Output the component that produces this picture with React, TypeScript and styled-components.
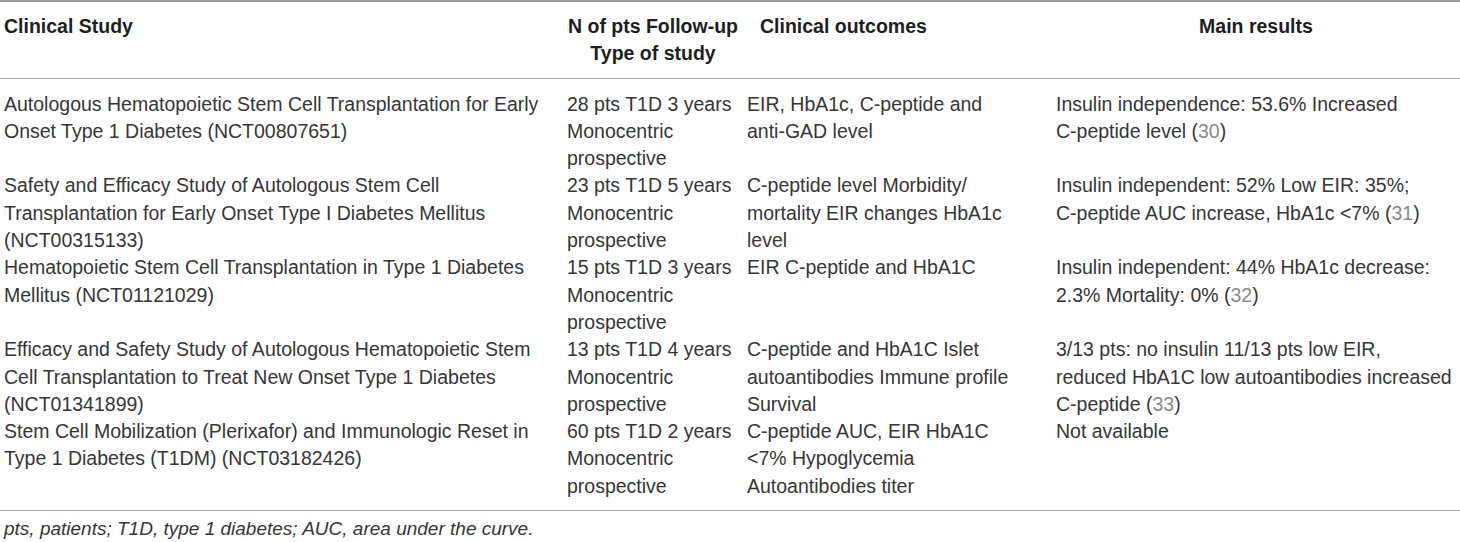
import React from "react";
import styled, { createGlobalStyle } from "styled-components";

const Global = createGlobalStyle`
  html, body { margin: 0; padding: 0; background: #ffffff; }
  body { font-family: "Liberation Sans", Arial, sans-serif; }
`;

const Page = styled.div`
  width: 1460px;
  background: #ffffff;
`;

const Table = styled.table`
  width: 1460px;
  border-collapse: collapse;
  table-layout: fixed;
  font-family: "Liberation Sans", Arial, sans-serif;
  font-size: 19.5px;
  line-height: 27.3px;
  color: #363636;
  border-top: 2px solid #9c9c9c;
`;

const HeadRow = styled.tr`
  border-bottom: 1px solid #a8a8a8;
`;

const Th = styled.th<{ $align?: "left" | "center"; $indent?: number }>`
  font-weight: bold;
  color: #1e1e1e;
  text-align: ${(p) => p.$align ?? "center"};
  vertical-align: top;
  padding: 11px 4px 10px ${(p) => 4 + (p.$indent ?? 0)}px;
  white-space: nowrap;
`;

const BodyRow = styled.tr<{ $last?: boolean }>`
  border-bottom: ${(p) => (p.$last ? "1px solid #a8a8a8" : "none")};
`;

const Td = styled.td<{ $padTop: number; $padBottom: number }>`
  vertical-align: top;
  text-align: left;
  padding: ${(p) => p.$padTop}px 4px ${(p) => p.$padBottom}px 4px;
  white-space: nowrap;
`;

const Line = styled.span`
  display: block;
`;

const Ref = styled.span`
  color: #8a8a8a;
`;

const Footnote = styled.p`
  margin: 0;
  padding: 4px 4px 0 4px;
  font-family: "Liberation Sans", Arial, sans-serif;
  font-style: italic;
  font-size: 19px;
  line-height: 27px;
  color: #363636;
`;

type Cell = React.ReactNode[];

const withRef = (text: string, ref: string) => (
  <>
    {text} (<Ref>{ref}</Ref>)
  </>
);

const rows: Cell[][] = [
  [
    ["Autologous Hematopoietic Stem Cell Transplantation for Early", "Onset Type 1 Diabetes (NCT00807651)"],
    ["28 pts T1D 3 years", "Monocentric", "prospective"],
    ["EIR, HbA1c, C-peptide and", "anti-GAD level"],
    ["Insulin independence: 53.6% Increased", withRef("C-peptide level", "30")],
  ],
  [
    [
      "Safety and Efficacy Study of Autologous Stem Cell",
      "Transplantation for Early Onset Type I Diabetes Mellitus",
      "(NCT00315133)",
    ],
    ["23 pts T1D 5 years", "Monocentric", "prospective"],
    ["C-peptide level Morbidity/", "mortality EIR changes HbA1c", "level"],
    ["Insulin independent: 52% Low EIR: 35%;", withRef("C-peptide AUC increase, HbA1c <7%", "31")],
  ],
  [
    ["Hematopoietic Stem Cell Transplantation in Type 1 Diabetes", "Mellitus (NCT01121029)"],
    ["15 pts T1D 3 years", "Monocentric", "prospective"],
    ["EIR C-peptide and HbA1C"],
    ["Insulin independent: 44% HbA1c decrease:", withRef("2.3% Mortality: 0%", "32")],
  ],
  [
    [
      "Efficacy and Safety Study of Autologous Hematopoietic Stem",
      "Cell Transplantation to Treat New Onset Type 1 Diabetes",
      "(NCT01341899)",
    ],
    ["13 pts T1D 4 years", "Monocentric", "prospective"],
    ["C-peptide and HbA1C Islet", "autoantibodies Immune profile", "Survival"],
    [
      "3/13 pts: no insulin 11/13 pts low EIR,",
      "reduced HbA1C low autoantibodies increased",
      withRef("C-peptide", "33"),
    ],
  ],
  [
    ["Stem Cell Mobilization (Plerixafor) and Immunologic Reset in", "Type 1 Diabetes (T1DM) (NCT03182426)"],
    ["60 pts T1D 2 years", "Monocentric", "prospective"],
    ["C-peptide AUC, EIR HbA1C", "<7% Hypoglycemia", "Autoantibodies titer"],
    ["Not available"],
  ],
];

export default function App() {
  return (
    <Page>
      <Global />
      <Table>
        <colgroup>
          <col style={{ width: 563 }} />
          <col style={{ width: 180 }} />
          <col style={{ width: 309 }} />
          <col style={{ width: 408 }} />
        </colgroup>
        <thead>
          <HeadRow>
            <Th $align="left">Clinical Study</Th>
            <Th>
              N of pts Follow-up
              <br />
              Type of study
            </Th>
            <Th $align="left" $indent={13}>
              Clinical outcomes
            </Th>
            <Th>Main results</Th>
          </HeadRow>
        </thead>
        <tbody>
          {rows.map((row, i) => (
            <BodyRow key={i} $last={i === rows.length - 1}>
              {row.map((cell, j) => (
                <Td key={j} $padTop={i === 0 ? 12 : 0} $padBottom={i === rows.length - 1 ? 10 : 0}>
                  {cell.map((line, k) => (
                    <Line key={k}>{line}</Line>
                  ))}
                </Td>
              ))}
            </BodyRow>
          ))}
        </tbody>
      </Table>
      <Footnote>pts, patients; T1D, type 1 diabetes; AUC, area under the curve.</Footnote>
    </Page>
  );
}
